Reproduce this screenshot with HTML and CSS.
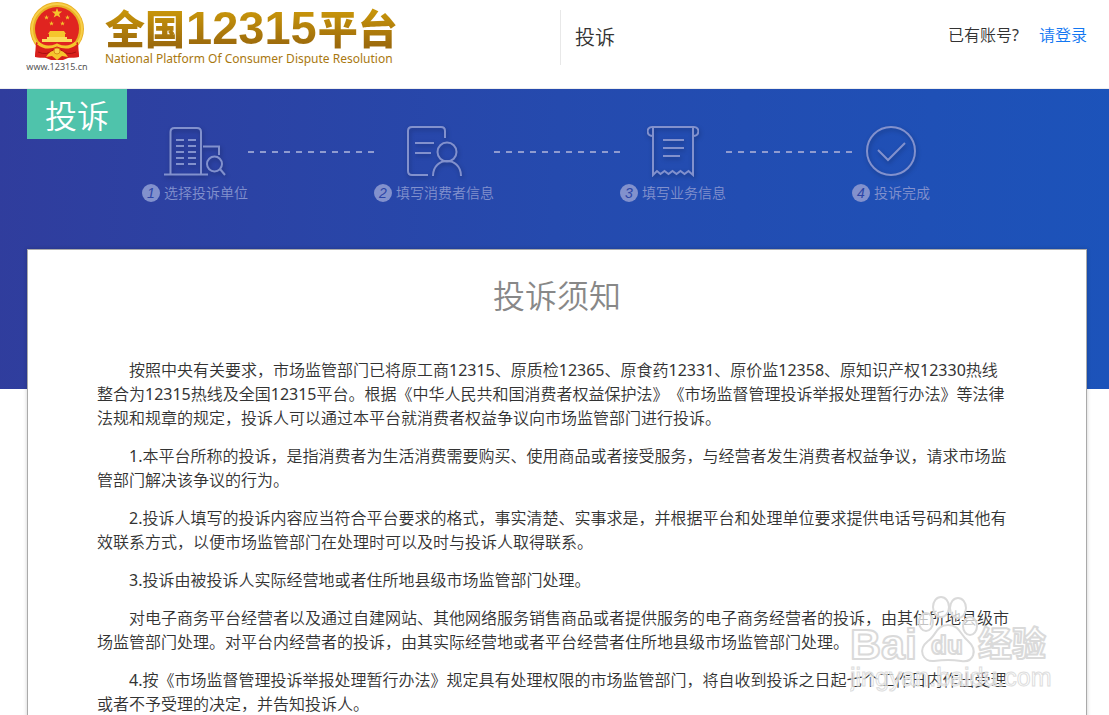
FILE: index.html
```html
<!DOCTYPE html>
<html lang="zh-CN">

<head>
    <meta charset="UTF-8">
    <meta name="viewport" content="width=device-width, initial-scale=1.0">
    <title>全国12315平台 - 投诉</title>
    <link rel="stylesheet" href="styles.css">
</head>

<body>
    <header class="header">
        <div class="brand">
            <div class="emblem">
                <svg width="56" height="59" viewBox="0 0 56 59">
                    <path d="M9 38 L6 54 L17 56 L22 58 H34 L39 56 L50 54 L47 38Z" fill="#d81f1c"/>
                    <circle cx="28" cy="27" r="27" fill="#e9b024"/>
                    <circle cx="28" cy="27" r="25" fill="none" stroke="#f7cf48" stroke-width="2"/>
                    <circle cx="28" cy="27" r="22" fill="#e02420"/>
                    <path fill="#f5c52c" d="M28 6l1.300 3.600h3.900l-3.100 2.300 1.200 3.700-3.300-2.200-3.300 2.200 1.200-3.700-3.100-2.300h3.900z"/>
                    <g fill="#f5c52c">
                        <path id="star" d="M17.500 13l.6 1.700h1.800l-1.400 1.100.5 1.700-1.500-1-1.500 1 .5-1.700-1.400-1.100h1.800z"/>
                        <use href="#star" x="21"/>
                        <use href="#star" x="5" y="6"/>
                        <use href="#star" x="16" y="6"/>
                        <path d="M21 29h14l2 3H19zM20 32h16v3H20z"/>
                    </g>
                    <path d="M18 35H38V37H43V40H13V37H18Z" fill="#fbdc5c"/>
                    <path d="M7 40 Q17 46 28 43 Q39 46 49 40 L50 55 Q40 58 32 50 H24 Q16 58 6 55Z" fill="#d81f1c"/>
                    <path d="M9 41 Q17 48 28 43 Q39 48 47 41" fill="none" stroke="#f5c52c" stroke-width="3"/>
                    <path d="M9 50 Q18 54 24 48M47 50 Q38 54 32 48" fill="none" stroke="#a81212"/>
                    <path d="M17 55 Q21 48 28 48 Q35 48 39 55 L33 54 L28 58 L23 54Z" fill="#f5c52c"/>
                    <circle cx="28" cy="49" r="3" fill="#f9d44b" stroke="#d88e18"/>
                </svg>
                <span class="site">www.12315.cn</span>
            </div>
            <div class="brand-name">
                <h1 class="name">全国<span class="num">12315</span>平台</h1>
                <p class="name-en">National Platform Of Consumer Dispute Resolution</p>
            </div>
        </div>
        <div class="section-name">投诉</div>
        <div class="account">已有账号? <a class="login" href="#">请登录</a></div>
    </header>

    <div class="banner">
        <div class="tag">投诉</div>
        <ol class="steps">
            <li class="step">
                <svg class="icon" width="62" height="52" viewBox="0 0 62 52">
                    <path d="M0 49.500H44M6.500 49V7q0-4 4-4H33q4 0 4 4V49M39 21.500H55V30"/>
                    <path d="M12 15H20M24 15H32M12 21H20M24 21H32M12 27H20M24 27H32M12 33H20M24 33H32M12 39H20M24 39H32"/>
                    <circle cx="50.500" cy="39" r="7.500"/>
                    <path d="M56 44L61 50"/>
                </svg>
                <span class="label"><i class="no">1</i>选择投诉单位</span>
            </li>
            <li class="line"></li>
            <li class="step">
                <svg class="icon" width="58" height="52" viewBox="0 0 58 52">
                    <path d="M23 50H7q-4 0-4-4V6q0-4 4-4H36q4 0 4 4V13M10 18H29M10 28H26"/>
                    <circle cx="42" cy="27" r="9.500"/>
                    <path d="M28 51C28 31 56 31 56 51"/>
                </svg>
                <span class="label"><i class="no">2</i>填写消费者信息</span>
            </li>
            <li class="line"></li>
            <li class="step">
                <svg class="icon" width="52" height="52" viewBox="0 0 52 52">
                    <path d="M6 11C-1 11-1 2 5 2H47C53 2 53 11 46 11"/>
                    <path d="M6 2V50L10 46L13.500 49L17.500 46L21.500 49L25.500 46L29.500 49L33.500 46L37.500 49L41.500 46L46 50V2M16 15H37M16 23H37M16 31H33"/>
                </svg>
                <span class="label"><i class="no">3</i>填写业务信息</span>
            </li>
            <li class="line"></li>
            <li class="step">
                <svg class="icon" width="52" height="52" viewBox="0 0 52 52">
                    <circle cx="26" cy="26" r="24"/>
                    <path d="M13 25L23 35L40 18"/>
                </svg>
                <span class="label"><i class="no">4</i>投诉完成</span>
            </li>
        </ol>
    </div>

    <main class="notice">
        <h2 class="notice-title">投诉须知</h2>
        <p>按照中央有关要求，市场监管部门已将原工商12315、原质检12365、原食药12331、原价监12358、原知识产权12330热线整合为12315热线及全国12315平台。根据《中华人民共和国消费者权益保护法》《市场监督管理投诉举报处理暂行办法》等法律法规和规章的规定，投诉人可以通过本平台就消费者权益争议向市场监管部门进行投诉。</p>
        <p>1.本平台所称的投诉，是指消费者为生活消费需要购买、使用商品或者接受服务，与经营者发生消费者权益争议，请求市场监管部门解决该争议的行为。</p>
        <p>2.投诉人填写的投诉内容应当符合平台要求的格式，事实清楚、实事求是，并根据平台和处理单位要求提供电话号码和其他有效联系方式，以便市场监管部门在处理时可以及时与投诉人取得联系。</p>
        <p>3.投诉由被投诉人实际经营地或者住所地县级市场监管部门处理。</p>
        <p>对电子商务平台经营者以及通过自建网站、其他网络服务销售商品或者提供服务的电子商务经营者的投诉，由其住所地县级市场监管部门处理。对平台内经营者的投诉，由其实际经营地或者平台经营者住所地县级市场监管部门处理。</p>
        <p>4.按《市场监督管理投诉举报处理暂行办法》规定具有处理权限的市场监管部门，将自收到投诉之日起七个工作日内作出受理或者不予受理的决定，并告知投诉人。</p>
    </main>

    <svg class="watermark" width="210" height="110" viewBox="0 0 210 110">
        <g class="mark">
            <ellipse cx="91" cy="17" rx="8" ry="10"/>
            <ellipse cx="108" cy="18" rx="8" ry="10"/>
            <ellipse cx="76" cy="32" rx="7" ry="9"/>
            <ellipse cx="120" cy="36" rx="7" ry="9"/>
            <path d="M98 35C86 35 86 46 78 51C67 60 73 72 84 71C92 70 104 70 111 71C124 73 128 60 118 51C110 45 110 35 98 35Z"/>
            <text x="0" y="69" font-size="43">Bai</text>
            <text x="81" y="64" font-size="26">du</text>
            <text x="128" y="66" font-size="34">经验</text>
        </g>
        <text class="mark-url" x="0" y="96" font-size="25">jingyan.baidu.com</text>
    </svg>
</body>

</html>
```

FILE: styles.css
```css
* {
    box-sizing: border-box;
}

body {
    position: relative;
    height: 100vh;
    margin: 0;
    overflow: hidden;
    font-family: "Noto Sans", "Noto Sans CJK SC DemiLight", "Noto Sans CJK SC", sans-serif;
    font-size: 16px;
    line-height: 24px;
    color: #333;
    background: #fff;
    text-spacing-trim: space-all;
}

h1,
h2,
p,
ol {
    margin: 0;
    padding: 0;
    font-weight: inherit;
}

.header {
    display: flex;
    align-items: flex-start;
    height: 89px;
    padding: 0 22px 0 27px;
    border-bottom: 1px solid #eee;
}

.brand {
    display: flex;
    width: 533px;
}

.emblem {
    display: flex;
    flex-direction: column;
    align-items: center;
    width: 60px;
    padding-top: 2px;
}

.site {
    font-size: 9px;
    line-height: 12px;
    color: #555;
}

.brand-name {
    padding-left: 18px;
}

.name {
    height: 50px;
    font-family: "Noto Sans CJK SC", sans-serif;
    font-size: 40px;
    font-weight: 900;
    line-height: 54px;
    white-space: nowrap;
    color: transparent;
    background: linear-gradient(#c9960a 20%, #9c6a0c 90%);
    -webkit-background-clip: text;
    background-clip: text;
}

.num {
    margin: 0 1px;
    font-family: "Liberation Sans", Arial, sans-serif;
    font-size: 47px;
    font-weight: bold;
}

.name-en {
    font-size: 12px;
    line-height: 18px;
    white-space: nowrap;
    color: #a9780f;
}

.section-name {
    height: 55px;
    margin-top: 10px;
    padding-left: 14px;
    border-left: 1px solid #e8e8e8;
    font-size: 20px;
    line-height: 56px;
}

.account {
    margin-left: auto;
    padding-top: 23px;
}

.login {
    margin-left: 16px;
    color: #1277f2;
    text-decoration: none;
}

.banner {
    display: flex;
    align-items: flex-start;
    height: 300px;
    padding: 0 22px 0 27px;
    background: linear-gradient(92deg, #303d9d, #254aae 50%, #1c53ba);
}

.tag {
    width: 100px;
    height: 50px;
    font-size: 32px;
    line-height: 54px;
    text-align: center;
    color: #fff;
    background: #4fc3ab;
}

.steps {
    display: flex;
    margin-left: 15px;
    padding-top: 36px;
    list-style: none;
    color: #8291cd;
}

.step {
    display: flex;
    flex-direction: column;
    align-items: center;
}

.icon {
    fill: none;
    stroke: #8291cd;
    stroke-width: 2;
    filter: drop-shadow(1px 2px 2px rgba(0, 0, 0, 0.25));
}

.label {
    display: flex;
    align-items: center;
    margin-top: 4px;
    font-size: 14px;
    white-space: nowrap;
}

.no {
    width: 18px;
    height: 18px;
    margin-right: 4px;
    border-radius: 50%;
    font-family: "Liberation Sans", Arial, sans-serif;
    line-height: 18px;
    text-align: center;
    color: #2c45a6;
    background: #8291cd;
}

.line {
    width: 126px;
    height: 2px;
    margin-top: 26px;
    background: repeating-linear-gradient(90deg, #8f9bd0 0 6px, transparent 6px 12px);
}

.notice {
    margin: -140px 22px 0 27px;
    padding: 26px 69px 40px;
    border: 1px solid #aaa;
    background: #fff;
    box-shadow: 0 0 4px rgba(0, 0, 0, 0.2);
}

.notice-title {
    margin-bottom: 42px;
    font-size: 32px;
    line-height: 40px;
    text-align: center;
    color: #888;
}

.notice p {
    margin: 0 4px 14px 0;
    text-indent: 2em;
}

/* watermark lies over the notice text */
.watermark {
    position: absolute;
    right: 49px;
    bottom: 15px;
    font-family: "Liberation Sans", "Noto Sans CJK SC", sans-serif;
    font-weight: bold;
}

.mark {
    fill: rgba(255, 255, 255, 0.7);
    stroke: #dadada;
    stroke-width: 2;
    stroke-linejoin: round;
}

.mark-url {
    fill: rgba(255, 255, 255, 0.6);
    stroke: #ddd;
    font-weight: normal;
}
```
